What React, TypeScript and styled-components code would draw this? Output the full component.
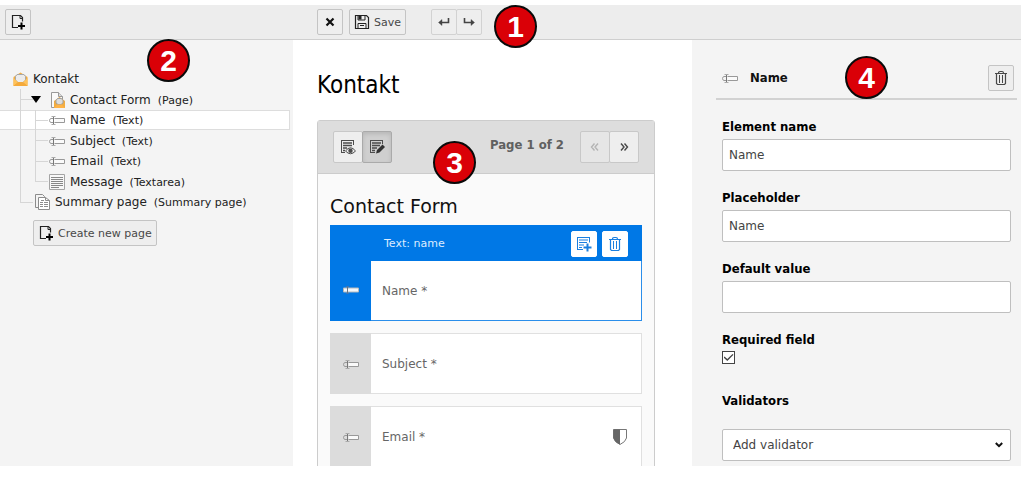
import React, { useState } from "react";
import styled, { createGlobalStyle, css } from "styled-components";

const sans = `"DejaVu Sans", Verdana, sans-serif`;
const condensed = `"DejaVu Sans Condensed", "DejaVu Sans", Verdana, sans-serif`;

const GlobalStyle = createGlobalStyle`
  *, *::before, *::after { box-sizing: border-box; }
  body { margin: 0; background: #fff; font-family: ${sans}; font-size: 12px; color: #111; }
  button, input, select { font-family: inherit; }
  svg { display: block; flex: none; }
`;

/* ---------- page frame ---------- */

const Page = styled.div`
  display: flex;
  flex-direction: column;
  height: 100vh;
  padding: 5px 3px 19px 0;
`;

const columns = css`
  display: grid;
  grid-template-columns: 293px minmax(0, 1fr) 329px;
`;

const Toolbar = styled.header`
  ${columns}
  flex: none;
  height: 35px;
  background: #ededed;
  border-bottom: 1px solid #cfcfcf;
`;

const ToolbarSection = styled.div<{ $inset: number }>`
  position: relative;
  display: flex;
  align-items: center;
  padding-left: ${(p) => p.$inset}px;
  gap: 6px;
`;

const Workspace = styled.div`
  ${columns}
  flex: 1;
  min-height: 0;
  overflow: hidden;
`;

const Callout = styled.span<{ $x: number; $y: number }>`
  position: absolute;
  left: ${(p) => p.$x}px;
  top: ${(p) => p.$y}px;
  z-index: 2;
  display: flex;
  align-items: center;
  justify-content: center;
  width: 43px;
  height: 43px;
  border: 2px solid #0a0a0a;
  border-radius: 50%;
  background: #da0007;
  color: #fff;
  font: bold 30px/40px "Liberation Sans", Arial, sans-serif;
`;

/* ---------- buttons ---------- */

const Button = styled.button`
  display: inline-flex;
  align-items: center;
  justify-content: center;
  gap: 4px;
  height: 26px;
  min-width: 26px;
  padding: 0 4px;
  border: 1px solid #c4c4c4;
  border-radius: 2px;
  background: #eee;
  color: #484848;
  font-size: 11px;
  white-space: nowrap;
`;

const ButtonGroup = styled.div<{ $spaced?: boolean }>`
  display: flex;
  margin-left: ${(p) => (p.$spaced ? 19 : 0)}px;
  & > button + button {
    margin-left: -1px;
  }
`;

const FaintButton = styled(Button)`
  border-color: #d2d2d2;
`;

const LargeButton = styled(Button)<{ $pressed?: boolean }>`
  width: 30px;
  height: 32px;
  border-color: ${(p) => (p.$pressed ? "#aaa" : "#c8c8c8")};
  background: ${(p) => (p.$pressed ? "#cfcfcf" : "#eee")};
  box-shadow: ${(p) => (p.$pressed ? "inset 0 2px 4px rgba(0,0,0,.12)" : "none")};
  &:disabled {
    color: #b4b4b4;
    background: #e6e6e6;
  }
`;

const BlueButton = styled(Button)`
  border-color: #fff;
  background: #fff;
  color: #1a7fe0;
`;

/* ---------- structure tree ---------- */

const Sidebar = styled.nav`
  padding: 29px 3px 0 0;
  background: #f4f4f4;
`;

const Tree = styled.ul`
  margin: 0;
  padding: 0;
  list-style: none;
`;

const TreeRow = styled.li<{ $inset: number; $selected?: boolean }>`
  display: flex;
  align-items: center;
  height: 20px;
  padding-left: ${(p) => p.$inset}px;
  white-space: nowrap;
  background: ${(p) => (p.$selected ? "#fff" : "transparent")};
  box-shadow: ${(p) => (p.$selected ? "inset -1px 1px #ddd, inset 0 -1px #ddd" : "none")};
  &:nth-child(even) {
    height: 21px;
  }
`;

const Guide = styled.span<{ $kind: "line" | "tee" | "end" }>`
  align-self: stretch;
  flex: none;
  width: 15px;
  background-image: linear-gradient(#d6d6d6, #d6d6d6), linear-gradient(#d6d6d6, #d6d6d6);
  background-repeat: no-repeat;
  background-position: 0 0, 0 50%;
  background-size: 1px ${(p) => (p.$kind === "end" ? "50%" : "100%")},
    ${(p) => (p.$kind === "line" ? "0 0" : "13px 1px")};
`;

const Caret = styled.span`
  flex: none;
  width: 10px;
  height: 7px;
  margin: 0 9px 0 -4px;
  background: #000;
  clip-path: polygon(0 0, 100% 0, 50% 100%);
`;

const NodeIcon = styled.span<{ $pull?: boolean }>`
  display: flex;
  justify-content: center;
  width: ${(p) => (p.$pull ? 17 : 15)}px;
  margin-left: ${(p) => (p.$pull ? -2 : 0)}px;
  margin-right: 5px;
`;

const NodeLabel = styled.span`
  color: #222;
`;

const NodeType = styled.span`
  margin-left: 7px;
  padding-top: 1px;
  font-size: 11px;
  color: #222;
`;

const SidebarActions = styled.div`
  padding: 8px 0 0 33px;
`;

/* ---------- form stage ---------- */

const Stage = styled.main`
  min-width: 0;
  padding: 27px 37px 0 24px;
  background: #fff;
`;

const StageTitle = styled.h1`
  margin: 0 0 17px;
  font: normal 24px/36px ${condensed};
  color: #000;
`;

const Card = styled.section`
  border: 1px solid #ccc;
  border-radius: 3px;
  background: #fafafa;
`;

const CardHeader = styled.div`
  position: relative;
  display: flex;
  align-items: center;
  height: 53px;
  padding: 0 15px;
  border-bottom: 1px solid #ccc;
  background: #ddd;
`;

const PageCount = styled.strong`
  margin: 0 16px 4px auto;
  font: bold 13px/16px ${condensed};
  color: #606060;
`;

const CardBody = styled.div`
  padding: 20px 12px 0;
`;

const FormTitle = styled.h2`
  margin: 0 0 7px;
  font: normal 19px/24px ${sans};
  color: #111;
`;

const Element = styled.article<{ $active?: boolean }>`
  display: flex;
  margin-bottom: 12px;
  border-style: solid;
  border-width: 1px 1px 1px 0;
  border-color: ${(p) => (p.$active ? "#2b8eea" : "#e0e0e0")};
  background: #fff;
`;

const ElementHandle = styled.div<{ $active?: boolean }>`
  display: flex;
  align-items: center;
  justify-content: center;
  flex: none;
  width: 41px;
  margin: -1px 0;
  padding-top: ${(p) => (p.$active ? 34 : 0)}px;
  background: ${(p) => (p.$active ? "#0078e6" : "#dcdcdc")};
`;

const ElementMain = styled.div`
  flex: 1;
  min-width: 0;
`;

const ElementBar = styled.div`
  display: flex;
  align-items: center;
  gap: 5px;
  height: 36px;
  margin: -1px -1px 0 0;
  padding: 1px 14px 0 13px;
  background: #0078e6;
  color: #dcecff;
  font-size: 11px;
`;

const Spacer = styled.span`
  flex: 1;
`;

const ElementContent = styled.div`
  display: flex;
  align-items: center;
  justify-content: space-between;
  height: 59px;
  padding: 0 13px 0 11px;
  color: #666;
`;

/* ---------- inspector ---------- */

const Inspector = styled.aside`
  position: relative;
  padding: 22px 4px 0 24px;
  background: #f4f4f4;
`;

const InspectorHeader = styled.div`
  display: flex;
  align-items: center;
  height: 38px;
  padding: 0 3px 4px 6px;
  border-bottom: 2px solid #d2d2d2;
`;

const InspectorTitle = styled.h2`
  flex: 1;
  margin: 0 0 0 12px;
  font: bold 13px/16px ${condensed};
  color: #111;
`;

const Fields = styled.form`
  display: flex;
  flex-direction: column;
  gap: 19px;
  padding: 19px 6px 0 6px;
`;

const Field = styled.div<{ $gap?: number }>`
  display: flex;
  flex-direction: column;
  align-items: flex-start;
  gap: ${(p) => p.$gap ?? 4}px;
`;

const FieldLabel = styled.label`
  font: bold 13px/16px ${condensed};
  color: #000;
`;

const control = css`
  width: 100%;
  height: 32px;
  border: 1px solid #bfbfbf;
  border-radius: 2px;
  background-color: #fff;
  color: #444;
  font-size: 12px;
`;

const TextInput = styled.input`
  ${control}
  padding: 0 6px;
`;

const SelectWrap = styled.div`
  display: grid;
  align-items: center;
  width: 100%;
  & > * {
    grid-area: 1 / 1;
  }
  & > svg {
    justify-self: end;
    margin-right: 8px;
    pointer-events: none;
  }
`;

const Select = styled.select`
  ${control}
  appearance: none;
  padding: 0 10px;
`;

const Checkbox = styled.input`
  appearance: none;
  width: 13px;
  height: 13px;
  margin: 0 0 10px;
  border: 1px solid #444;
  background: #fff;
  display: grid;
  place-items: center;
  &:checked::after {
    content: "";
    width: 10px;
    height: 7px;
    background: #444;
    clip-path: polygon(0 50%, 10% 36%, 38% 72%, 90% 0, 100% 12%, 38% 100%);
  }
`;

/* ---------- icons ---------- */

const PageAddIcon = () => (
  <svg width="16" height="16" viewBox="0 0 16 16" fill="none" stroke="#222" aria-hidden="true">
    <path d="M8 13.5H2.5v-12h8l2 2v4" strokeWidth="1.2" />
    <path d="M10 1.5v3h3" strokeWidth="1" />
    <path d="M11.5 8.5v7M8 12h7" stroke="#000" strokeWidth="2" />
  </svg>
);

const CloseIcon = () => (
  <svg width="16" height="16" viewBox="0 0 16 16" fill="none" stroke="#111" aria-hidden="true">
    <path d="M4.5 4.5l7 7M11.5 4.5l-7 7" strokeWidth="2.2" />
  </svg>
);

const SaveIcon = () => (
  <svg width="16" height="16" viewBox="0 0 16 16" fill="none" stroke="#222" aria-hidden="true">
    <path d="M1.5 1.5h11l2 2v11h-13z" strokeWidth="1.2" />
    <path d="M4 14.5v-5h8v5M6 11.5h4" />
    <path d="M4 1.5V6h7V1.5" />
    <path d="M4.500 2h3v3.500h-3z" fill="#222" stroke="none" />
  </svg>
);

const ReturnIcon = ({ flip = false }: { flip?: boolean }) => (
  <svg width="16" height="16" viewBox="0 0 16 16" aria-hidden="true">
    <g transform={flip ? "translate(16 0) scale(-1 1)" : undefined}>
      <path d="M12.5 4v4.500H5" fill="none" stroke="#444" strokeWidth="1.6" />
      <path d="M2.5 8.500L6 5.500v6z" fill="#444" stroke="#444" strokeWidth=".4" />
    </g>
  </svg>
);

const TextFieldIcon = ({ active = false }: { active?: boolean }) =>
  active ? (
    <svg width="16" height="16" viewBox="0 0 16 16" fill="none" aria-hidden="true">
      <path d="M.5 6h15v4H.5z" fill="#f4f8fc" stroke="#b4b8bc" />
      <path d="M4.5 4.500v7" stroke="#6a7480" />
      <path d="M3 4.500h3M3 11.500h3" stroke="#3c74b4" />
    </svg>
  ) : (
    <svg width="16" height="16" viewBox="0 0 16 16" fill="none" stroke="#999" aria-hidden="true">
      <path d="M5.5 6.500h10v4h-10" fill="#fafafa" />
      <path d="M4 6.500H2Q.5 6.800.5 8.500T2 10.500h2" />
      <path d="M4.500 4.500v8" stroke="#777" />
      <path d="M2.500 4.500h4M2.500 12.500h4" stroke="#aaa" />
    </svg>
  );

const TextareaIcon = () => (
  <svg width="16" height="16" viewBox="0 0 16 16" fill="none" aria-hidden="true">
    <path d="M.5.5h15v15H.5z" fill="#f8f8f8" stroke="#a4a4a4" />
    <path d="M2 3.500h12M2 5.500h12M2 7.500h12M2 9.500h12M2 11.500h12M2 13.500h8" stroke="#888" />
  </svg>
);

const EnvelopeIcon = () => (
  <svg width="15" height="15" viewBox="0 0 15 15" aria-hidden="true">
    <path d="M.5 5L7.500.5l7 4.500v9h-14z" fill="#f0ac42" />
    <path d="M4 2.500h7l1.500 2V8L10 10.500H5L2.500 8V4.500z" fill="#ececec" stroke="#a8a8a8" />
    <path d="M.5 6l4.500 4-4.500 4zM14.500 6L10 10l4.500 4z" fill="#ffc25a" />
    <path d="M.5 14l5-4h4l5 4z" fill="#f5aa3a" />
  </svg>
);

const FormPageIcon = () => (
  <svg width="15" height="16" viewBox="0 0 15 16" aria-hidden="true">
    <path d="M1.500.5h7l4 4v11h-11z" fill="#fafafa" stroke="#999" />
    <path d="M8.500.5v4h4" fill="#ddd" stroke="#999" />
    <path d="M4 9l5.500-4L15 9v7H4z" fill="#f0ac42" />
    <path d="M7.500 6.500h4l1.500 2v2.500l-2 1.500H8L6 11V8.500z" fill="#ddd" stroke="#a0a0a0" />
    <path d="M4 16l3.500-3.500h4L15 16z" fill="#ffb347" />
  </svg>
);

const SummaryIcon = () => (
  <svg width="15" height="16" viewBox="0 0 15 16" fill="none" stroke="#8c8c8c" aria-hidden="true">
    <path d="M3.500 13.500h-3V.5h7l2 2v1" />
    <path d="M3.500 3.500h7l4 3v9h-11z" fill="#fff" />
    <path d="M10.500 3.500v3h4M6 6.500h3M5 8.500h3M9 8.500h4M5 10.500h3M9 10.500h4M5 12.500h3M9 12.500h4" />
  </svg>
);

const TrashIcon = () => (
  <svg width="16" height="16" viewBox="0 0 16 16" fill="none" stroke="currentColor" aria-hidden="true">
    <path d="M2 3.500h12M5.500 3.200Q5.500 1.500 7 1.500h2q1.500 0 1.500 1.700M3.500 4v9.500l1 1h7l1-1V4" strokeWidth="1.200" />
    <path d="M6.500 5v8M9.500 5v8" />
  </svg>
);

const PreviewIcon = () => (
  <svg width="16" height="16" viewBox="0 0 16 16" fill="none" stroke="#4c4c4c" aria-hidden="true">
    <path d="M1 1.500h13M1 13.500h4M1.500 1v13M13.500 1v5" />
    <path d="M3 4h9M3 6.500h9M3 9h4M3 11.500h2" strokeWidth="1.300" />
    <path d="M5.500 12q5-6.500 10 0q-5 5.500-10 0z" fill="#eee" />
    <circle cx="10.500" cy="11.800" r="2.200" fill="#4c4c4c" stroke="none" />
  </svg>
);

const EditIcon = () => (
  <svg width="16" height="16" viewBox="0 0 16 16" fill="none" stroke="#4c4c4c" aria-hidden="true">
    <path d="M1 1.500h13M1 13.500h5M1.500 1v13M13.500 1v4" />
    <path d="M3 4h9M3 6.500h8M3 9h5M3 11.500h3" strokeWidth="1.300" />
    <path d="M7 14.500l1-3.500L13.500 5.500l2.500 2.500-5.500 5.500z" fill="#333" stroke="none" />
  </svg>
);

const ElementAddIcon = () => (
  <svg width="16" height="16" viewBox="0 0 16 16" fill="none" stroke="currentColor" aria-hidden="true">
    <path d="M1 1.500h13M1 13.500h6M1.500 1v13M13.500 1v5.500" />
    <path d="M3 4h9M3 6.500h8M3 9h5M3 11.500h3" strokeWidth="1.200" />
    <path d="M11.500 7.500v8M7.500 11.500h8" strokeWidth="2" />
  </svg>
);

const ChevronsIcon = ({ flip = false }: { flip?: boolean }) => (
  <svg width="16" height="16" viewBox="0 0 16 16" fill="none" stroke="currentColor" aria-hidden="true">
    <path
      d={flip ? "M7.5 4.500L4.500 8l3 3.500M11 4.500L8 8l3 3.500" : "M5 4.500L8 8l-3 3.500M8.500 4.500L11.500 8l-3 3.500"}
      strokeWidth="1.400"
    />
  </svg>
);

const ShieldIcon = () => (
  <svg width="16" height="16" viewBox="0 0 16 16" aria-hidden="true">
    <path d="M1.500.5h13V9q-1 4-6.500 6.500Q2.500 13 1.500 9z" fill="#fff" stroke="#777" />
    <path d="M1.500.5H8v15Q2.500 13 1.500 9z" fill="#666" />
  </svg>
);

const SelectArrow = () => (
  <svg width="8" height="6" viewBox="0 0 8 6" fill="none" stroke="#111" aria-hidden="true">
    <path d="M.8 1L4 4.200 7.200 1" strokeWidth="2" />
  </svg>
);

/* ---------- screen ---------- */

const fieldNodes = [
  { label: "Name", type: "(Text)", selected: true },
  { label: "Subject", type: "(Text)" },
  { label: "Email", type: "(Text)" },
  { label: "Message", type: "(Textarea)", area: true },
];

export default function App() {
  const [name, setName] = useState("Name");
  const [placeholder, setPlaceholder] = useState("Name");
  const [value, setValue] = useState("");
  const [required, setRequired] = useState(true);

  return (
    <Page>
      <GlobalStyle />
      <Toolbar>
        <ToolbarSection $inset={5}>
          <Button type="button" aria-label="New page">
            <PageAddIcon />
          </Button>
          <Callout $x={147} $y={34}>2</Callout>
        </ToolbarSection>
        <ToolbarSection $inset={24}>
          <Button type="button" aria-label="Close">
            <CloseIcon />
          </Button>
          <Button type="button">
            <SaveIcon />
            Save
          </Button>
          <ButtonGroup $spaced>
            <FaintButton type="button" aria-label="Undo">
              <ReturnIcon />
            </FaintButton>
            <FaintButton type="button" aria-label="Redo">
              <ReturnIcon flip />
            </FaintButton>
          </ButtonGroup>
          <Callout $x={201} $y={0}>1</Callout>
        </ToolbarSection>
      </Toolbar>

      <Workspace>
        <Sidebar aria-label="Form structure">
          <Tree>
            <TreeRow $inset={13}>
              <NodeIcon><EnvelopeIcon /></NodeIcon>
              <NodeLabel>Kontakt</NodeLabel>
            </TreeRow>
            <TreeRow $inset={20}>
              <Guide $kind="tee" />
              <Caret />
              <NodeIcon><FormPageIcon /></NodeIcon>
              <NodeLabel>Contact Form</NodeLabel>
              <NodeType>(Page)</NodeType>
            </TreeRow>
            {fieldNodes.map((node, i) => (
              <TreeRow key={node.label} $inset={20} $selected={node.selected}>
                <Guide $kind="line" />
                <Guide $kind={i === fieldNodes.length - 1 ? "end" : "tee"} />
                <NodeIcon $pull>{node.area ? <TextareaIcon /> : <TextFieldIcon />}</NodeIcon>
                <NodeLabel>{node.label}</NodeLabel>
                <NodeType>{node.type}</NodeType>
              </TreeRow>
            ))}
            <TreeRow $inset={20}>
              <Guide $kind="end" />
              <NodeIcon><SummaryIcon /></NodeIcon>
              <NodeLabel>Summary page</NodeLabel>
              <NodeType>(Summary page)</NodeType>
            </TreeRow>
          </Tree>
          <SidebarActions>
            <Button type="button">
              <PageAddIcon />
              Create new page
            </Button>
          </SidebarActions>
        </Sidebar>

        <Stage>
          <StageTitle>Kontakt</StageTitle>
          <Card>
            <CardHeader>
              <ButtonGroup>
                <LargeButton type="button" aria-label="Preview mode">
                  <PreviewIcon />
                </LargeButton>
                <LargeButton type="button" aria-label="Edit mode" aria-pressed="true" $pressed>
                  <EditIcon />
                </LargeButton>
              </ButtonGroup>
              <Callout $x={115} $y={20}>3</Callout>
              <PageCount>Page 1 of 2</PageCount>
              <ButtonGroup>
                <LargeButton type="button" aria-label="Previous page" disabled>
                  <ChevronsIcon flip />
                </LargeButton>
                <LargeButton type="button" aria-label="Next page">
                  <ChevronsIcon />
                </LargeButton>
              </ButtonGroup>
            </CardHeader>
            <CardBody>
              <FormTitle>Contact Form</FormTitle>
              <Element $active>
                <ElementHandle $active>
                  <TextFieldIcon active />
                </ElementHandle>
                <ElementMain>
                  <ElementBar>
                    Text: name
                    <Spacer />
                    <BlueButton type="button" aria-label="Add element">
                      <ElementAddIcon />
                    </BlueButton>
                    <BlueButton type="button" aria-label="Delete element">
                      <TrashIcon />
                    </BlueButton>
                  </ElementBar>
                  <ElementContent>Name *</ElementContent>
                </ElementMain>
              </Element>
              <Element>
                <ElementHandle>
                  <TextFieldIcon />
                </ElementHandle>
                <ElementMain>
                  <ElementContent>Subject *</ElementContent>
                </ElementMain>
              </Element>
              <Element>
                <ElementHandle>
                  <TextFieldIcon />
                </ElementHandle>
                <ElementMain>
                  <ElementContent>
                    Email *
                    <ShieldIcon />
                  </ElementContent>
                </ElementMain>
              </Element>
            </CardBody>
          </Card>
        </Stage>

        <Inspector>
          <Callout $x={153} $y={16}>4</Callout>
          <InspectorHeader>
            <TextFieldIcon />
            <InspectorTitle>Name</InspectorTitle>
            <Button type="button" aria-label="Delete element">
              <TrashIcon />
            </Button>
          </InspectorHeader>
          <Fields>
            <Field>
              <FieldLabel htmlFor="element-name">Element name</FieldLabel>
              <TextInput id="element-name" value={name} onChange={(e) => setName(e.target.value)} />
            </Field>
            <Field>
              <FieldLabel htmlFor="placeholder">Placeholder</FieldLabel>
              <TextInput id="placeholder" value={placeholder} onChange={(e) => setPlaceholder(e.target.value)} />
            </Field>
            <Field>
              <FieldLabel htmlFor="default-value">Default value</FieldLabel>
              <TextInput id="default-value" value={value} onChange={(e) => setValue(e.target.value)} />
            </Field>
            <Field $gap={3}>
              <FieldLabel htmlFor="required">Required field</FieldLabel>
              <Checkbox
                id="required"
                type="checkbox"
                checked={required}
                onChange={(e) => setRequired(e.target.checked)}
              />
            </Field>
            <Field $gap={20}>
              <FieldLabel htmlFor="validators">Validators</FieldLabel>
              <SelectWrap>
                <Select id="validators">
                  <option>Add validator</option>
                </Select>
                <SelectArrow />
              </SelectWrap>
            </Field>
          </Fields>
        </Inspector>
      </Workspace>
    </Page>
  );
}
